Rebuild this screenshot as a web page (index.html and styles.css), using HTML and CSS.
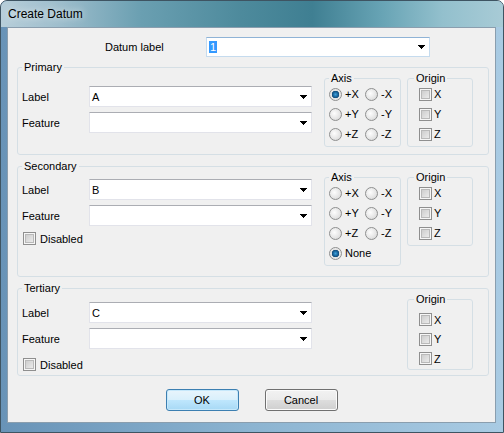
FILE: index.html
```html
<!DOCTYPE html>
<html lang="en">
<head>
    <meta charset="UTF-8">
    <title>Create Datum</title>
    <link rel="stylesheet" href="styles.css">
</head>
<body>

    <div class="window">
        <div class="titlebar">Create Datum</div>

        <div class="frame">
            <div class="client">

                <!-- Datum label -->
                <div class="datum-row">
                    <span class="datum-label">Datum label</span>
                    <div class="combo datum-combo">
                        <span class="combo-text"><span class="selected">1</span></span>
                        <svg class="arrow" width="7" height="4" viewBox="0 0 7 4"><path d="M0 0H7V1H6V2H5V3H4V4H3V3H2V2H1V1H0Z"/></svg>
                    </div>
                </div>

                <!-- Primary -->
                <fieldset class="group group-primary">
                    <legend>Primary</legend>
                    <div class="group-body">
                        <div class="fields">
                            <div class="field-row">
                                <span class="field-label">Label</span>
                                <div class="combo">
                                    <span class="combo-text">A</span>
                                    <svg class="arrow" width="7" height="4" viewBox="0 0 7 4"><path d="M0 0H7V1H6V2H5V3H4V4H3V3H2V2H1V1H0Z"/></svg>
                                </div>
                            </div>
                            <div class="field-row">
                                <span class="field-label">Feature</span>
                                <div class="combo">
                                    <span class="combo-text"></span>
                                    <svg class="arrow" width="7" height="4" viewBox="0 0 7 4"><path d="M0 0H7V1H6V2H5V3H4V4H3V3H2V2H1V1H0Z"/></svg>
                                </div>
                            </div>
                        </div>

                        <fieldset class="sub axis">
                            <legend>Axis</legend>
                            <div class="axis-grid">
                                <label class="opt"><input type="radio" name="axisP" checked>+X</label>
                                <label class="opt"><input type="radio" name="axisP">-X</label>
                                <label class="opt"><input type="radio" name="axisP">+Y</label>
                                <label class="opt"><input type="radio" name="axisP">-Y</label>
                                <label class="opt"><input type="radio" name="axisP">+Z</label>
                                <label class="opt"><input type="radio" name="axisP">-Z</label>
                            </div>
                        </fieldset>

                        <fieldset class="sub origin">
                            <legend>Origin</legend>
                            <div class="origin-list">
                                <label class="opt"><input type="checkbox">X</label>
                                <label class="opt"><input type="checkbox">Y</label>
                                <label class="opt"><input type="checkbox">Z</label>
                            </div>
                        </fieldset>
                    </div>
                </fieldset>

                <!-- Secondary -->
                <fieldset class="group group-secondary">
                    <legend>Secondary</legend>
                    <div class="group-body">
                        <div class="fields">
                            <div class="field-row">
                                <span class="field-label">Label</span>
                                <div class="combo">
                                    <span class="combo-text">B</span>
                                    <svg class="arrow" width="7" height="4" viewBox="0 0 7 4"><path d="M0 0H7V1H6V2H5V3H4V4H3V3H2V2H1V1H0Z"/></svg>
                                </div>
                            </div>
                            <div class="field-row">
                                <span class="field-label">Feature</span>
                                <div class="combo">
                                    <span class="combo-text"></span>
                                    <svg class="arrow" width="7" height="4" viewBox="0 0 7 4"><path d="M0 0H7V1H6V2H5V3H4V4H3V3H2V2H1V1H0Z"/></svg>
                                </div>
                            </div>
                            <label class="opt check-row"><input type="checkbox">Disabled</label>
                        </div>

                        <fieldset class="sub axis">
                            <legend>Axis</legend>
                            <div class="axis-grid">
                                <label class="opt"><input type="radio" name="axisS">+X</label>
                                <label class="opt"><input type="radio" name="axisS">-X</label>
                                <label class="opt"><input type="radio" name="axisS">+Y</label>
                                <label class="opt"><input type="radio" name="axisS">-Y</label>
                                <label class="opt"><input type="radio" name="axisS">+Z</label>
                                <label class="opt"><input type="radio" name="axisS">-Z</label>
                                <label class="opt none"><input type="radio" name="axisS" checked>None</label>
                            </div>
                        </fieldset>

                        <fieldset class="sub origin">
                            <legend>Origin</legend>
                            <div class="origin-list">
                                <label class="opt"><input type="checkbox">X</label>
                                <label class="opt"><input type="checkbox">Y</label>
                                <label class="opt"><input type="checkbox">Z</label>
                            </div>
                        </fieldset>
                    </div>
                </fieldset>

                <!-- Tertiary -->
                <fieldset class="group group-tertiary">
                    <legend>Tertiary</legend>
                    <div class="group-body">
                        <div class="fields">
                            <div class="field-row">
                                <span class="field-label">Label</span>
                                <div class="combo">
                                    <span class="combo-text">C</span>
                                    <svg class="arrow" width="7" height="4" viewBox="0 0 7 4"><path d="M0 0H7V1H6V2H5V3H4V4H3V3H2V2H1V1H0Z"/></svg>
                                </div>
                            </div>
                            <div class="field-row">
                                <span class="field-label">Feature</span>
                                <div class="combo">
                                    <span class="combo-text"></span>
                                    <svg class="arrow" width="7" height="4" viewBox="0 0 7 4"><path d="M0 0H7V1H6V2H5V3H4V4H3V3H2V2H1V1H0Z"/></svg>
                                </div>
                            </div>
                            <label class="opt check-row"><input type="checkbox">Disabled</label>
                        </div>

                        <fieldset class="sub origin origin-loose">
                            <legend>Origin</legend>
                            <div class="origin-list">
                                <label class="opt"><input type="checkbox">X</label>
                                <label class="opt"><input type="checkbox">Y</label>
                                <label class="opt"><input type="checkbox">Z</label>
                            </div>
                        </fieldset>
                    </div>
                </fieldset>

                <div class="buttons">
                    <button class="btn btn-default">OK</button>
                    <button class="btn">Cancel</button>
                </div>

            </div>
        </div>
    </div>

</body>
</html>
```

FILE: styles.css
```css
body {
    margin: 0;
    font-family: "Liberation Sans", Arial, sans-serif;
    font-size: 11px;
    color: #000;
    background: #fff;
}

/* window chrome */
.window {
    width: 504px;
    height: 433px;
    box-sizing: border-box;
    border: 1px solid #3e5462;
    border-radius: 7px 7px 0 0;
    display: flex;
    flex-direction: column;
    overflow: hidden;
    background: linear-gradient(90deg, #6893b7 0%, #8cb4d1 50%, #a9cbe3 100%);
}

.titlebar {
    height: 26px;
    line-height: 26px;
    padding-left: 7px;
    font-size: 12px;
    text-shadow: 0 0 7px rgba(255, 255, 255, 0.9);
    background: linear-gradient(90deg, #b7ced9 0%, #9dbdcc 12%, #6a9fb1 28%, #4d8a9c 48%, #3f7f92 62%, #68a4b5 76%, #93c0cd 88%, #a8cbd6 100%);
}

.frame {
    flex: 1;
    display: flex;
    padding: 0 7px 9px 6px;
}

.client {
    flex: 1;
    background: #f0f0f0;
    border: 1px solid #8a9eae;
}

/* datum label row */
.datum-row {
    display: flex;
    align-items: center;
    margin-top: 9px;
    padding-left: 97px;
}

.datum-label {
    width: 101px;
}

/* combo boxes */
.combo {
    display: flex;
    align-items: center;
    justify-content: space-between;
    box-sizing: border-box;
    width: 223px;
    height: 21px;
    background: #fff;
    border: 1px solid #e2e3ea;
    border-top-color: #abadb3;
}

.datum-combo {
    width: 224px;
    height: 20px;
    border-color: #c5dbee;
    border-top-color: #8fb3d6;
}

.combo-text {
    padding-left: 2px;
}

.selected {
    background: #3399ff;
    color: #fff;
    padding: 0 1px;
}

.arrow {
    margin-right: 4px;
    fill: #000;
    shape-rendering: crispEdges;
}

/* group boxes */
fieldset {
    margin: 0;
    min-width: 0;
    border: 1px solid #d5dfe5;
    border-radius: 3px;
}

legend {
    padding: 0 2px;
    font-size: 11px;
    line-height: 11px;
}

.group {
    margin: 5px 6px 0 9px;
    padding: 0 15px 0 4px;
}

.group + .group {
    margin-top: 6px;
}

.group-body {
    display: flex;
    align-items: flex-start;
}

.group-primary { padding-bottom: 7px; }
.group-primary .fields { margin-top: 13px; }

.group-secondary { padding-bottom: 10px; }
.group-secondary .fields { margin-top: 7px; }
.group-secondary .check-row { margin-top: 6px; }

.group-tertiary { padding-bottom: 4px; }
.group-tertiary .fields { margin-top: 8px; }
.group-tertiary .check-row { margin-top: 9px; }

.fields {
    flex: none;
    width: 290px;
}

.field-row {
    display: flex;
    align-items: center;
}

.field-row + .field-row {
    margin-top: 5px;
}

.field-label {
    width: 67px;
}

.check-row {
    height: 13px;
    padding-left: 1px;
}

.check-row input {
    margin-right: 4px;
}

.sub {
    box-sizing: border-box;
    padding: 0 0 2px 4px;
}

.axis {
    width: 77px;
    margin-left: 12px;
}

.origin {
    width: 66px;
    margin-left: auto;
    padding-left: 6px;
}

.origin-loose {
    padding-bottom: 0;
}

.axis-grid {
    display: grid;
    grid-template-columns: 36px auto;
    grid-auto-rows: 20px;
    align-items: center;
}

.none {
    grid-column: 1 / 3;
}

.origin-list {
    display: grid;
    grid-auto-rows: 20px;
    align-items: center;
    padding-left: 5px;
}

.origin-loose .origin-list {
    grid-auto-rows: 19.5px;
    padding-top: 5px;
}

.opt {
    display: flex;
    align-items: center;
}

/* radio + checkbox, drawn like the classic theme */
input {
    appearance: none;
    flex: none;
    box-sizing: border-box;
    width: 13px;
    height: 13px;
    margin: 0 3px 0 0;
}

input[type="radio"] {
    border: 1px solid #8e8f8f;
    border-radius: 50%;
    background: radial-gradient(circle at 40% 40%, #fdfdfd 0%, #e6e6e6 55%, #cfcfcf 100%);
}

input[type="radio"]:checked {
    background: radial-gradient(circle at 50% 50%, #3fa2dc 0, #1f6ea6 2px, #0f4b7b 3.5px, #e2e2e2 4px, #f6f6f6 100%);
}

input[type="checkbox"] {
    border: 1px solid #8f8f8f;
    background: linear-gradient(135deg, #c6c6c6 0%, #f2f2f2 100%);
    box-shadow: inset 0 0 0 1px #f6f6f6, inset 0 0 0 2px #b9b9b9;
}

.origin input {
    margin-right: 2px;
}

/* buttons */
.buttons {
    display: flex;
    justify-content: center;
    gap: 26px;
    margin-top: 13px;
}

.btn {
    width: 73px;
    height: 22px;
    padding: 0;
    font-family: inherit;
    font-size: 11px;
    color: #000;
    border: 1px solid #707070;
    border-radius: 3px;
    background: linear-gradient(#f2f2f2 0%, #ebebeb 48%, #dddddd 52%, #cfcfcf 100%);
    box-shadow: inset 0 0 0 1px #fbfbfb;
}

.btn-default {
    border-color: #3c7fb1;
    background: linear-gradient(#e8f5fc 0%, #d9f0fc 48%, #bee6fd 52%, #a7d9f5 100%);
    box-shadow: inset 0 0 0 1px #c6e8fb;
}
```
